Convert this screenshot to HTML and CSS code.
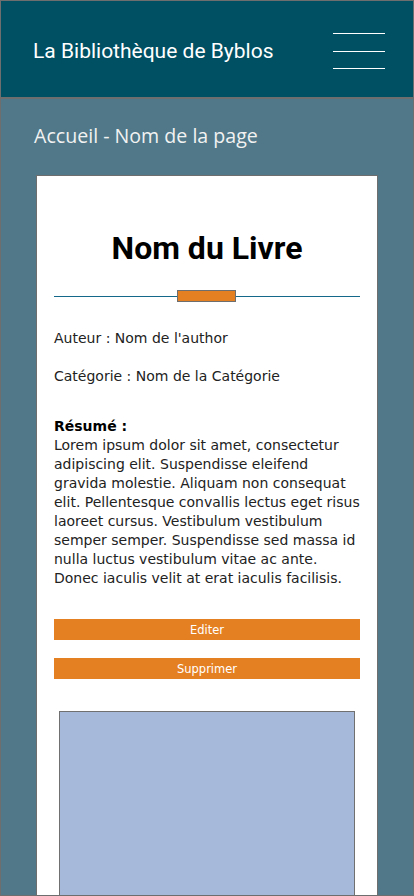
FILE: index.html
```html
<!DOCTYPE html>
<html lang="fr">
<head>
<meta charset="utf-8">
<title>La Bibliothèque de Byblos</title>
<link rel="stylesheet" href="styles.css">
</head>
<body>
<div class="frame">
  <header class="topbar">
    <h1 class="brand">La Bibliothèque de Byblos</h1>
    <div class="burger"><span></span><span></span><span></span></div>
  </header>
  <main class="main">
    <p class="crumb">Accueil - Nom de la page</p>
    <section class="card">
      <h2 class="title">Nom du Livre</h2>
      <div class="divider"><span class="mark"></span></div>
      <p class="meta">Auteur : Nom de l'author</p>
      <p class="meta">Catégorie : Nom de la Catégorie</p>
      <div class="summary">
        <strong>Résumé :</strong><br>
        Lorem ipsum dolor sit amet, consectetur<br>
        adipiscing elit. Suspendisse eleifend<br>
        gravida molestie. Aliquam non consequat<br>
        elit. Pellentesque convallis lectus eget risus<br>
        laoreet cursus. Vestibulum vestibulum<br>
        semper semper. Suspendisse sed massa id<br>
        nulla luctus vestibulum vitae ac ante.<br>
        Donec iaculis velit at erat iaculis facilisis.
      </div>
      <div class="actions">
        <button class="btn">Editer</button>
        <button class="btn">Supprimer</button>
      </div>
      <div class="cover"></div>
    </section>
  </main>
</div>
</body>
</html>
```
FILE: styles.css
```css
* { box-sizing: border-box; }
html, body { margin: 0; padding: 0; height: 100%; }
body { font-family: "DejaVu Sans", "Lato", sans-serif; overflow: hidden; }
.frame {
  width: 414px; height: 896px;
  border: 1px solid #6e6e6e;
  background: #507888;
  display: flex; flex-direction: column;
  overflow: hidden;
}
.topbar {
  height: 98px; flex: none;
  background: #005064;
  border-bottom: 2px solid #6e6e6e;
  display: flex; align-items: center; justify-content: space-between;
  padding: 3px 28px 0 32px;
}
.brand {
  margin: 0; color: #fff;
  font-family: Roboto, sans-serif; font-weight: 400; font-size: 21px;
}
.burger { width: 52px; display: flex; flex-direction: column; gap: 16.5px; padding-top: 1px; }
.burger span { display: block; height: 1px; background: #fff; }
.main { flex: 1; display: flex; flex-direction: column; padding: 0 35px 0 35px; }
.crumb {
  margin: 24px 0 0 -2px; color: #f2f2f2;
  font-family: "Open Sans", sans-serif; font-size: 19.6px; line-height: 26px;
  height: 52px;
}
.card {
  flex: 1; background: #fff;
  border: 1px solid #6e6e6e; border-bottom: 0;
  padding: 0 17px;
}
.title {
  margin: 53px 0 0; text-align: center;
  font-family: Roboto, sans-serif; font-weight: 700; font-size: 32px; line-height: 38px; color: #000;
}
.divider {
  margin-top: 29px; height: 1px; background: #14698a; position: relative;
}
.mark {
  position: absolute; left: 123px; top: -6px; width: 59px; height: 12px;
  background: #e58022; border: 1px solid #6e6e6e;
}
.meta {
  margin: 0; font-size: 14px; line-height: 19px; color: #222;
}
.meta:first-of-type { margin-top: 32px; }
.meta + .meta { margin-top: 19px; }
.summary {
  margin-top: 31px; font-size: 14px; line-height: 19px; color: #222;
}
.summary strong { color: #000; }
.actions { margin-top: 31px; display: flex; flex-direction: column; gap: 18px; }
.btn {
  height: 21px; border: 0; background: #e58022; color: #fff;
  font-family: "DejaVu Sans", sans-serif; font-size: 11.5px; padding: 0; width: 100%;
}
.cover {
  margin: 32px 5px 0 5px; height: 200px;
  background: #a6b9da; border: 1px solid #707070;
}
```
